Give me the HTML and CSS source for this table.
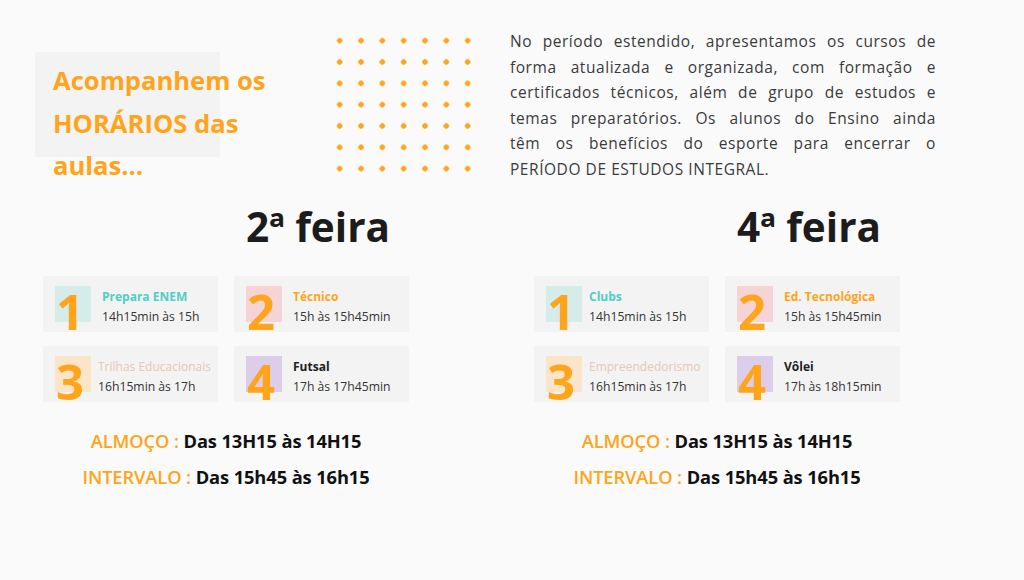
FILE: index.html
```html
<!DOCTYPE html>
<html lang="pt-BR">
<head>
<meta charset="utf-8">
<title>Horários</title>
<link rel="stylesheet" href="styles.css">
</head>
<body>
<main class="page">
  <section class="top">
    <div class="title-box">
      <h1 class="title">Acompanhem os<br>HORÁRIOS das<br>aulas...</h1>
    </div>
    <div class="dots" aria-hidden="true"></div>
    <p class="intro">No período estendido, apresentamos os cursos de forma atualizada e organizada, com formação e certificados técnicos, além de grupo de estudos e temas preparatórios. Os alunos do Ensino ainda têm&nbsp;os benefícios do esporte para encerrar o PERÍODO&nbsp;DE&nbsp;ESTUDOS&nbsp;INTEGRAL.</p>
  </section>

  <section class="schedule">
    <div class="day">
      <h2 class="day-title">2ª feira</h2>
      <div class="cards">
        <div class="card">
          <div class="num sq-teal"><span>1</span></div>
          <div class="info"><div class="name c-teal">Prepara ENEM</div><div class="time">14h15min às 15h</div></div>
        </div>
        <div class="card">
          <div class="num sq-pink"><span>2</span></div>
          <div class="info"><div class="name c-orange">Técnico</div><div class="time">15h às 15h45min</div></div>
        </div>
        <div class="card">
          <div class="num sq-peach"><span>3</span></div>
          <div class="info info-wide"><div class="name c-peach">Trilhas Educacionais</div><div class="time">16h15min às 17h</div></div>
        </div>
        <div class="card">
          <div class="num sq-lav"><span>4</span></div>
          <div class="info"><div class="name c-dark">Futsal</div><div class="time">17h às 17h45min</div></div>
        </div>
      </div>
      <div class="breaks">
        <p class="break"><span class="label">ALMOÇO :</span> Das 13H15 às 14H15</p>
        <p class="break"><span class="label">INTERVALO :</span> Das 15h45 às 16h15</p>
      </div>
    </div>

    <div class="day">
      <h2 class="day-title">4ª feira</h2>
      <div class="cards">
        <div class="card">
          <div class="num sq-teal"><span>1</span></div>
          <div class="info info-wide"><div class="name c-teal">Clubs</div><div class="time">14h15min às 15h</div></div>
        </div>
        <div class="card">
          <div class="num sq-pink"><span>2</span></div>
          <div class="info"><div class="name c-orange">Ed. Tecnológica</div><div class="time">15h às 15h45min</div></div>
        </div>
        <div class="card">
          <div class="num sq-peach"><span>3</span></div>
          <div class="info info-wide"><div class="name c-peach">Empreendedorismo</div><div class="time">16h15min às 17h</div></div>
        </div>
        <div class="card">
          <div class="num sq-lav"><span>4</span></div>
          <div class="info"><div class="name c-dark">Vôlei</div><div class="time">17h às 18h15min</div></div>
        </div>
      </div>
      <div class="breaks">
        <p class="break"><span class="label">ALMOÇO :</span> Das 13H15 às 14H15</p>
        <p class="break"><span class="label">INTERVALO :</span> Das 15h45 às 16h15</p>
      </div>
    </div>
  </section>
</main>
</body>
</html>
```

FILE: styles.css
```css
* { box-sizing: border-box; }

html, body {
  margin: 0;
  padding: 0;
  background: #fafafa;
}

body {
  width: 1024px;
  height: 580px;
  overflow: hidden;
  font-family: "Open Sans", "Noto Sans", sans-serif;
  color: #222;
}

.page {
  width: 1024px;
}

/* ---------- top ---------- */
.top {
  display: flex;
  align-items: flex-start;
}

.title-box {
  flex: none;
  width: 185px;
  height: 105px;
  margin: 52px 0 0 35px;
  padding: 8px 0 0 18px;
  background: #f3f3f3;
}

.title {
  margin: 0;
  white-space: nowrap;
  font-size: 25.6px;
  line-height: 42.7px;
  font-weight: 700;
  color: #ffa41b;
}

.dots {
  flex: none;
  width: 149.3px;
  height: 149.3px;
  margin: 30px 0 0 108.7px;
  background-image: radial-gradient(circle, #ffa41b 2.4px, rgba(255,164,27,0) 3px);
  background-size: 21.33px 21.33px;
}

.intro {
  flex: none;
  width: 426px;
  margin: 29px 0 0 32px;
  font-family: "Open Sans", sans-serif;
  font-size: 15.5px;
  letter-spacing: 0.55px;
  line-height: 25.5px;
  text-align: justify;
  color: #3a3a3a;
}

/* ---------- schedule ---------- */
.schedule {
  display: flex;
  gap: 125px;
  padding-left: 43px;
}

.day {
  width: 366px;
}

.day-title {
  margin: 0;
  padding: 17px 0 0 203px;
  font-size: 40.5px;
  line-height: 56px;
  font-weight: 700;
  color: #1c1c1c;
  white-space: nowrap;
}

.cards {
  display: grid;
  grid-template-columns: 175px 175px;
  column-gap: 16px;
  row-gap: 14px;
  margin-top: 21px;
}

.card {
  display: flex;
  align-items: flex-start;
  height: 56px;
  padding: 10px 0 0 12px;
  background: #f3f3f3;
}

.num {
  flex: none;
  width: 36px;
  height: 36px;
}

.num span {
  display: block;
  padding: 7px 0 0 1px;
  font-size: 49px;
  line-height: 36px;
  font-weight: 700;
  color: #ffa41b;
}

.sq-teal  { background: #d5ecea; }
.sq-pink  { background: #f6d3d5; }
.sq-peach { background: #fae5c8; }
.sq-lav   { background: #dccdea; }

.info {
  padding: 1px 0 0 11px;
  white-space: nowrap;
}

.info-wide {
  padding-left: 7px;
}

.name {
  font-size: 12px;
  line-height: 20px;
  font-weight: 700;
}

.time {
  font-size: 12.2px;
  line-height: 19px;
  font-weight: 500;
  color: #333;
}

.c-teal   { color: #4fcec5; }
.c-orange { color: #ffa41b; }
.c-peach  { color: #e8c8b1; font-weight: 400; }
.c-dark   { color: #1e1e1e; }

.breaks {
  margin-top: 21px;
  text-align: center;
}

.break {
  margin: 0;
  font-size: 18.3px;
  line-height: 36px;
  font-weight: 700;
  color: #111;
  white-space: nowrap;
  letter-spacing: -0.1px;
}

.label {
  color: #ffa41b;
  font-weight: 600;
}
```
